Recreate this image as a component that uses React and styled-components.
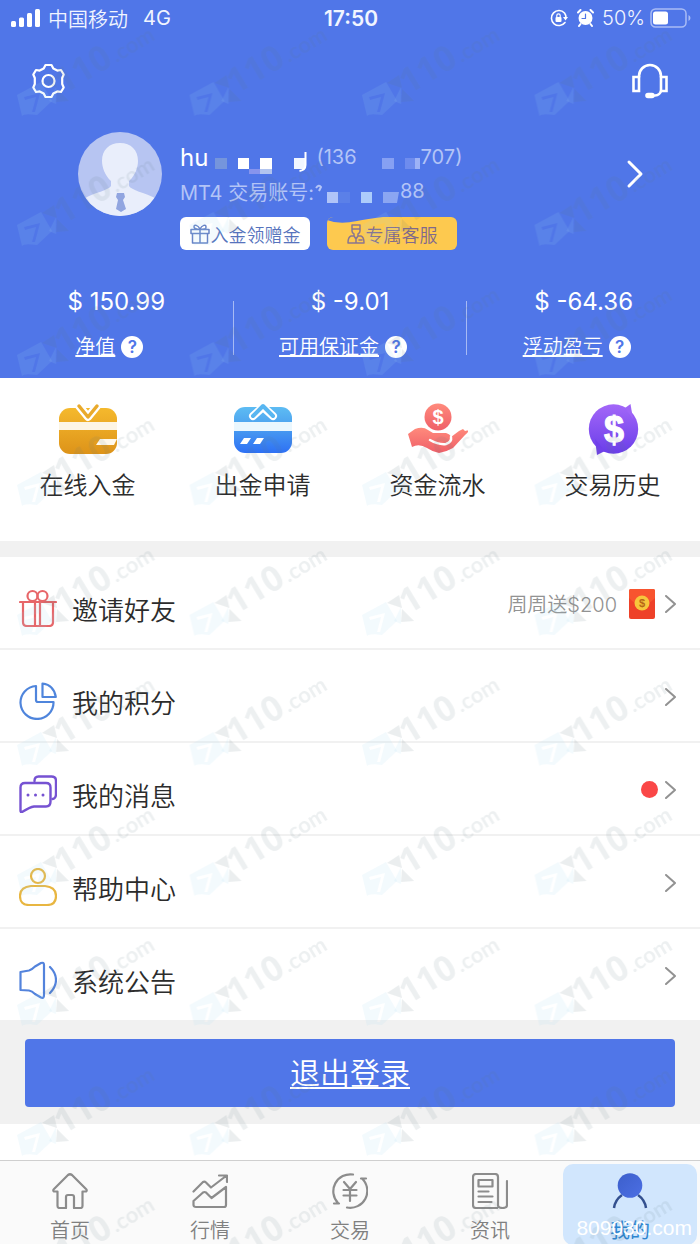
import React from "react";
import styled, { createGlobalStyle } from "styled-components";

const GlobalStyle = createGlobalStyle`
  * { box-sizing: border-box; }
  body {
    margin: 0;
    background: #fff;
    color: #3a3a3a;
    font-family: Inter, "Noto Sans CJK SC", sans-serif;
    font-size: 20px;
  }
  button { font: inherit; color: inherit; border: 0; padding: 0; background: none; cursor: pointer; }
  a { color: inherit; }
  svg { display: block; flex: none; }
`;

const Page = styled.div`
  position: relative;
  min-height: 100vh;
  display: flex;
  flex-direction: column;
  overflow: hidden;
`;

const Header = styled.header`
  background: #5076e8;
  color: #fff;
`;

const StatusBar = styled.div`
  display: grid;
  grid-template-columns: 1fr auto 1fr;
  align-items: center;
  height: 36px;
  padding: 0 9px 0 11px;
  color: #f1f5ff;
`;

const StatusGroup = styled.div`
  display: flex;
  align-items: center;
  gap: ${(p) => (p.$end ? 5 : 7)}px;
  font-weight: 350;
  justify-content: ${(p) => (p.$end ? "flex-end" : "flex-start")};
`;

const Network = styled.span`
  margin-left: 8px;
  font-weight: 400;
`;

const StatusIcons = styled.span`
  display: flex;
  gap: 9px;
  margin-right: 3px;
`;

const Clock = styled.time`
  font-size: 21px;
  font-weight: 600;
`;

const Toolbar = styled.div`
  display: flex;
  align-items: center;
  justify-content: space-between;
  height: 90px;
  padding: 0 31px;
`;

const Profile = styled.section`
  display: flex;
  align-items: flex-start;
  padding: 6px 56px 0 78px;
`;

const ProfileText = styled.div`
  flex: 1;
  padding: 8px 0 0 18px;
`;

const ProfileLine = styled.div`
  display: flex;
  align-items: center;
  height: 34px;
  color: #b3c4f7;
  white-space: pre;
`;

const UserName = styled.span`
  font-size: 24px;
  color: #fff;
`;

const ProfileLink = styled.button`
  height: 84px;
`;

const Chips = styled.div`
  display: flex;
  gap: 17px;
  margin-top: 9px;
`;

const Chip = styled.button`
  position: relative;
  display: flex;
  align-items: center;
  justify-content: center;
  gap: 1px;
  width: 130px;
  height: 33px;
  border-radius: 6px;
  overflow: hidden;
  font-size: 18px;
  font-weight: 350;
  color: ${(p) => (p.$gold ? "#80698c" : "#5673bd")};
  background: ${(p) => (p.$gold ? "#fdc94f" : "#fff")};
`;

const ChipSmudge = styled.svg`
  position: absolute;
  top: 0;
  left: 0;
`;

const Stats = styled.section`
  display: flex;
  padding: 37px 0 16px;
`;

const Stat = styled.div`
  flex: 1;
  display: flex;
  flex-direction: column;
  align-items: center;
  gap: 15px;
  line-height: 30px;
`;

const StatValue = styled.div`
  font-size: 24px;
`;

const StatLabel = styled.div`
  display: flex;
  align-items: center;
  gap: 6px;
  padding-right: 14px;
  font-weight: 350;
`;

const StatDivider = styled.div`
  width: 1px;
  height: 54px;
  margin-top: 14px;
  background: #a7baf4;
`;

const Help = styled.button`
  width: 22px;
  height: 22px;
  border-radius: 50%;
  background: #fff;
  color: #5076e8;
  font-size: 17px;
  font-weight: 600;
  line-height: 22px;
`;

const QuickGrid = styled.nav`
  display: grid;
  grid-template-columns: repeat(4, 1fr);
  padding: 25px 0 40px;
`;

const QuickItem = styled.a`
  display: flex;
  flex-direction: column;
  align-items: center;
  gap: 16px;
  font-size: 24px;
  font-weight: 350;
  line-height: 30px;
  color: #2c2c2c;
  text-decoration: none;
`;

const Menu = styled.nav`
  border-top: 16px solid #f1f1f1;
`;

const MenuRow = styled.a`
  display: flex;
  align-items: center;
  justify-content: space-between;
  height: 93px;
  padding: 0 24px 0 19px;
  border-bottom: 2px solid #f1f1f1;
  text-decoration: none;
  &:last-child { height: 91px; border-bottom: 0; }
`;

const MenuName = styled.span`
  display: flex;
  align-items: center;
  gap: 15px;
  padding-top: 10px;
`;

const MenuLabel = styled.span`
  padding-top: 6px;
  font-size: 26px;
  font-weight: 350;
  line-height: 32px;
  color: #2c2c2c;
`;

const MenuExtra = styled.span`
  display: flex;
  align-items: center;
  gap: 10px;
  padding-top: 2px;
  color: #929292;
  font-weight: 350;
`;

const Promo = styled.span`
  display: flex;
  align-items: center;
  gap: 12px;
`;

const UnreadDot = styled.span`
  width: 17px;
  height: 17px;
  margin-right: -3px;
  border-radius: 50%;
  background: #fa4747;
`;

const LogoutArea = styled.div`
  padding: 19px 25px 17px;
  background: #f1f1f1;
`;

const LogoutButton = styled.button`
  width: 100%;
  height: 68px;
  padding-bottom: 4px;
  border-radius: 4px;
  background: #5076e8;
  color: #fff;
  font-size: 30px;
  font-weight: 350;
  text-decoration: underline;
  text-decoration-thickness: 2px;
  text-underline-offset: 3px;
`;

const TabBar = styled.nav`
  display: grid;
  grid-template-columns: repeat(5, 1fr);
  height: 84px;
  margin-top: auto;
  border-top: 1px solid #cfcfcf;
  background: #fafafa;
`;

const Tab = styled.a`
  display: flex;
  flex-direction: column;
  align-items: center;
  gap: 8px;
  margin: 3px;
  padding-top: 9px;
  border-radius: 10px;
  line-height: 28px;
  text-decoration: none;
  font-weight: ${(p) => (p.$active ? 400 : 350)};
  color: ${(p) => (p.$active ? "#2d85cf" : "#808080")};
  background: ${(p) => (p.$active ? "#d1e6fd" : "transparent")};
`;

const WatermarkLayer = styled.svg`
  position: absolute;
  inset: 0;
  width: 100%;
  height: 100%;
  pointer-events: none;
`;

const SiteStamp = styled.span`
  position: absolute;
  right: 8px;
  bottom: 4px;
  color: #fff;
  font-family: "Liberation Sans", sans-serif;
  font-size: 21px;
  line-height: 24px;
  pointer-events: none;
`;

const line = { fill: "none", strokeLinecap: "round", strokeLinejoin: "round" };

const SignalIcon = () => (
  <svg width="30" height="18" viewBox="0 0 30 18" fill="#fff" aria-hidden="true">
    <rect x="0" y="12" width="5" height="6" rx="1.5" />
    <rect x="8" y="8.500" width="5" height="9.500" rx="1.500" />
    <rect x="16" y="4" width="5" height="14" rx="1.500" />
    <rect x="24" y="0" width="5" height="18" rx="1.500" />
  </svg>
);

const LockIcon = () => (
  <svg width="18" height="18" viewBox="0 0 18 18" aria-hidden="true">
    <path d="M14.500 4A7.500 7.500 0 1 0 15 13.500M14.500 4Q16 6 16 8.500" stroke="#fff" strokeWidth="1.600" {...line} />
    <path d="M13 8h5l-2.500 3.500z" fill="#fff" />
    <rect x="5.500" y="8" width="6" height="5" rx="1" fill="#fff" />
    <path d="M6.800 8V6.500a1.700 1.700 0 0 1 3.400 0V8" stroke="#fff" strokeWidth="1.200" fill="none" />
  </svg>
);

const AlarmIcon = () => (
  <svg width="17" height="18" viewBox="0 0 17 18" aria-hidden="true">
    <circle cx="8.500" cy="9" r="7" fill="#fff" />
    <path d="M1 3.500L3.500 1M16 3.500L13.500 1M3.500 15l-1.500 2M13.500 15l1.500 2" stroke="#fff" strokeWidth="2" {...line} />
    <path d="M8.500 5v4.500H5" stroke="#5076e8" strokeWidth="1.200" {...line} />
  </svg>
);

const BatteryIcon = () => (
  <svg width="41" height="20" viewBox="0 0 41 20" aria-hidden="true">
    <rect x="1" y="1" width="35" height="18" rx="4.500" fill="none" stroke="#a9bcf5" strokeWidth="1.500" />
    <rect x="3" y="3.500" width="15" height="13" rx="2.500" fill="#fff" />
    <path d="M38.500 7v6q2-1 2-3t-2-3z" fill="#a9bcf5" />
  </svg>
);

const GearIcon = () => (
  <svg width="35" height="36" viewBox="0 0 35 36" stroke="#fff" strokeWidth="2.200" {...line} aria-hidden="true">
    <path d="M14.500 2h6l1.800 3.600 4 2 3.700-.6 2.700 4.500-1.500 3.500v6l1.500 3.500-2.700 4.500-3.700-.6-4 2L20.500 34h-6l-1.800-3.600-4-2L5 29l-2.700-4.500L3.800 21v-6l-1.500-3.500L5 7l3.700.6 4-2z" />
    <circle cx="17.500" cy="18" r="6" />
  </svg>
);

const HeadsetIcon = () => (
  <svg width="38" height="36" viewBox="0 0 38 36" stroke="#fff" strokeWidth="2.600" {...line} aria-hidden="true">
    <path d="M8 14v-1a11 11 0 0 1 22 0v1" />
    <path d="M2.500 14H8v14H2.500zM30 14h5.500v14H30z" strokeLinejoin="miter" />
    <path d="M30 28q-1 4-6 4.500" />
    <rect x="15.500" y="31" width="7" height="3" rx="1.500" fill="#fff" />
  </svg>
);

const Avatar = () => (
  <svg width="84" height="84" viewBox="0 0 84 84" role="img" aria-label="头像">
    <clipPath id="avatarClip"><circle cx="42" cy="42" r="42" /></clipPath>
    <g clipPath="url(#avatarClip)">
      <rect width="84" height="84" fill="#b7c5f2" />
      <path d="M42 11c11 0 18 7 18 18 0 6-3 15-9 20v5c2 4 16 7 26 12v20H7V66c9-5 24-8 26-12v-5c-6-5-9-14-9-20 0-11 7-18 18-18z" fill="#e9eefb" />
      <path d="M39 61h7l1 4-2 3 3 9-5 3-5-3 2-9-2-3z" fill="#91a5e0" />
    </g>
  </svg>
);

const NameMosaic = () => (
  <svg width="108" height="34" viewBox="-4 0 108 34" aria-hidden="true">
    <rect x="3" y="18" width="12" height="11" fill="#7595dc" />
    <rect x="26" y="18" width="11" height="11" fill="#fff" />
    <rect x="48" y="18" width="12" height="11" fill="#fff" />
    <rect x="37" y="29" width="11" height="5" fill="#8794ed" />
    <rect x="48" y="29" width="12" height="5" fill="#b2c4ef" />
    <rect x="82" y="18" width="11" height="11" fill="#f1f6ff" />
    <path d="M93.500 12v13q0 5-6 6" stroke="#fff" strokeWidth="2" fill="none" />
  </svg>
);

const PhoneMosaic = () => (
  <svg width="64" height="34" viewBox="0 0 64 34" aria-hidden="true">
    <rect x="25" y="18" width="12" height="11" fill="#86a0f3" />
    <rect x="48" y="18" width="12" height="11" fill="#6e8cee" />
    <rect x="58" y="18" width="5" height="11" fill="#9db2f6" />
  </svg>
);

const AccountMosaic = () => (
  <svg width="86" height="34" viewBox="-4 0 86 34" aria-hidden="true">
    <path d="M-2 14q3-4 5-1l-2 4" stroke="#b3c4f7" strokeWidth="2" fill="none" />
    <rect x="9" y="18" width="11" height="11" fill="#b0c4f8" />
    <rect x="20" y="18" width="12" height="11" fill="#5b80e8" />
    <rect x="43" y="18" width="11" height="11" fill="#acccfb" />
    <path d="M65 18h16l-2 11H65z" fill="#8ba6f2" />
  </svg>
);

const BigChevron = () => (
  <svg width="18" height="30" viewBox="0 0 18 30" stroke="#fff" strokeWidth="3" {...line} aria-hidden="true">
    <path d="M3 3l12 12L3 27" />
  </svg>
);

const Chevron = () => (
  <svg width="11" height="18" viewBox="0 0 11 18" stroke="#929292" strokeWidth="2" {...line} aria-hidden="true">
    <path d="M1 1l9 8-9 8" />
  </svg>
);

const ChipGift = () => (
  <svg width="20" height="20" viewBox="0 0 20 20" stroke="#6683c6" strokeWidth="1.500" {...line} aria-hidden="true">
    <path d="M1 5.500h18v4H1zM2.500 9.500V19h15V9.500M10 5.500V19M10 5C8 1 4 0 4 3q0 2 6 2.500C16 5 16 5 16 3c0-3-4-2-6 2" />
  </svg>
);

const ChipAgent = () => (
  <svg width="18" height="20" viewBox="0 0 18 20" stroke="#8a7690" strokeWidth="1.500" {...line} aria-hidden="true">
    <path d="M5 1h8v6q0 2-2 3v2h3q3 1 3 7H1q0-6 3-7h3v-2Q5 9 5 7zM5 5h8M9 14v5M7 12l2 3 2-3M12 16h3" />
  </svg>
);

const DepositIcon = () => (
  <svg width="60" height="52" viewBox="0 0 60 52" aria-hidden="true">
    <linearGradient id="gold" x1="0" y1="0" x2="0" y2="1"><stop stopColor="#f5b92d" /><stop offset="1" stopColor="#dd9319" /></linearGradient>
    <rect x="1" y="5" width="58" height="46" rx="11" fill="url(#gold)" />
    <rect x="1" y="19" width="58" height="8" fill="#fdf5e4" />
    <path d="M21 3l9 11 9-11" stroke="#fff" strokeWidth="8" {...line} />
    <path d="M21 3l9 11 9-11" stroke="#e9aa2c" strokeWidth="3.500" {...line} />
    <path d="M38 42l4-6h17l-3 6z" fill="#fff8ea" />
  </svg>
);

const WithdrawIcon = () => (
  <svg width="60" height="52" viewBox="0 0 60 52" aria-hidden="true">
    <linearGradient id="sky" x1="0" y1="0" x2="0" y2="1"><stop stopColor="#5dbcf3" /><stop offset=".4" stopColor="#4da2ef" /><stop offset="1" stopColor="#2d70f5" /></linearGradient>
    <rect x="1" y="4" width="58" height="46" rx="11" fill="url(#sky)" />
    <rect x="1" y="19" width="58" height="9" fill="#eaf7fe" />
    <path d="M20 13L30 4l10 9" stroke="#fff" strokeWidth="8" {...line} />
    <path d="M20 13L30 3l10 10" stroke="#58b6f1" strokeWidth="4" {...line} />
    <path d="M7 41l4-6h7l-4 6zM20 41l4-6h7l-4 6z" fill="#fff" />
  </svg>
);

const FundsIcon = () => (
  <svg width="60" height="52" viewBox="0 0 60 52" aria-hidden="true">
    <linearGradient id="coral" x1="0" y1="0" x2="0" y2="1"><stop stopColor="#ff8a7c" /><stop offset="1" stopColor="#ef5f68" /></linearGradient>
    <circle cx="30" cy="14" r="13.500" fill="url(#coral)" />
    <text x="30" y="21" textAnchor="middle" fontFamily="Liberation Sans" fontSize="20" fontWeight="700" fill="#fff">$</text>
    <path d="M0 31L7 26q8-3 13 1l5 3h13q4 1 5 4l8-6 4-2 2 2 4-1q-1 3-4 5L45 45q-7 4-14 5-6-1-12-5-8-5-15-1z" fill="url(#coral)" />
    <path d="M22 37q9 5 16 4 6-2 5-7" stroke="#fff" strokeWidth="2.500" {...line} />
  </svg>
);

const HistoryIcon = () => (
  <svg width="60" height="52" viewBox="0 0 60 52" aria-hidden="true">
    <linearGradient id="violet" x1="0" y1="0" x2="0" y2="1"><stop stopColor="#a367f8" /><stop offset="1" stopColor="#6a3ee9" /></linearGradient>
    <circle cx="30.500" cy="26" r="24.700" fill="url(#violet)" />
    <path d="M42 5l5.500-4 2.500 15z" fill="#9f64f7" />
    <path d="M12 36l2 16 8-4z" fill="#7040ea" />
    <text x="31" y="39" textAnchor="middle" fontFamily="Liberation Sans" fontSize="36" fontWeight="700" fill="#fff" stroke="#fff">$</text>
  </svg>
);

const GiftIcon = () => (
  <svg width="38" height="38" viewBox="0 0 38 38" stroke="#e76669" strokeWidth="2.200" {...line} aria-hidden="true">
    <path d="M1 13h36M4 13v20q0 4 4 4h22q4 0 4-4V13M16 13v24M21 13v24" />
    <circle cx="13.500" cy="7" r="5" />
    <circle cx="23.500" cy="7" r="5" />
  </svg>
);

const PieIcon = () => (
  <svg width="38" height="38" viewBox="0 0 38 38" stroke="#4f85dc" strokeWidth="2.200" {...line} aria-hidden="true">
    <path d="M17 4a16.500 16.500 0 1 0 17.500 16H19q-2 0-2-2z" />
    <path d="M23.500 1.500Q35 3 36.800 15H23.500z" />
  </svg>
);

const ChatIcon = () => (
  <svg width="38" height="38" viewBox="0 0 38 38" stroke="#7652d2" strokeWidth="2.400" {...line} aria-hidden="true">
    <path d="M15.500 6q0-4.500 4-4.500h13q4.500 0 4.500 4.500v13q0 4.500-3.500 5" />
    <path d="M6 8h21q4.500 0 4.500 4.500v14q0 5-4.500 5H15Q11 32 3 37q-1.500.5-1.500-1.500v-23Q1.500 8 6 8z" />
    <path d="M9 20h.01M16.500 20h.01M24 20h.01" strokeWidth="3" />
  </svg>
);

const PersonIcon = () => (
  <svg width="38" height="38" viewBox="0 0 38 38" stroke="#e8b641" strokeWidth="2.200" {...line} aria-hidden="true">
    <circle cx="19" cy="8" r="7" />
    <path d="M12 18h14q11 1 11 10 0 9-9 9H10q-9 0-9-9 0-9 11-10z" />
  </svg>
);

const SpeakerIcon = () => (
  <svg width="38" height="38" viewBox="0 0 38 38" stroke="#5383dc" strokeWidth="2.200" {...line} aria-hidden="true">
    <path d="M1.500 11L10 9.500q3-1 6-4L22 2q3-1 3 2v30q0 4-3 2.500L16 33q-3-3-6-3.500L1.500 29z" />
    <path d="M31 6q6 6 6 13t-6 13" />
  </svg>
);

const EnvelopeIcon = () => (
  <svg width="26" height="30" viewBox="0 0 26 30" aria-hidden="true">
    <rect width="26" height="30" rx="2" fill="#ee4129" />
    <path d="M0 9q13 14 26 0V2q0-2-2-2H2Q0 0 0 2z" fill="#f8542f" />
    <circle cx="13" cy="14" r="7.500" fill="#f7c63c" />
    <text x="13" y="18" textAnchor="middle" fontFamily="Liberation Sans" fontSize="11" fontWeight="700" fill="#b76616">$</text>
  </svg>
);

const HomeIcon = () => (
  <svg width="36" height="36" viewBox="0 0 36 36" stroke="#8c8c8c" strokeWidth="2.200" {...line} aria-hidden="true">
    <path d="M5.500 18.500H2q-1.500-1 0-2.500L16 2q2-1.500 4 0l14 14q1.500 1.500 0 2.500h-3.500V33q0 2-2 2H22V24q0-2-2-2h-4q-2 0-2 2v11H7.500q-2 0-2-2z" />
  </svg>
);

const ChartIcon = () => (
  <svg width="36" height="36" viewBox="0 0 36 36" stroke="#8c8c8c" strokeWidth="2.200" {...line} aria-hidden="true">
    <path d="M1.500 18.500L11 9q1.500-1 3 .5l5 5L34 3M27 2.500h8V9" />
    <path d="M34 14v18q0 2-2 2H4q-2.500 0-2.500-2v-4L11 19.500q1.500-1 3 0L19.500 25z" />
  </svg>
);

const TradeIcon = () => (
  <svg width="36" height="36" viewBox="0 0 36 36" stroke="#8c8c8c" strokeWidth="2.200" {...line} aria-hidden="true">
    <path d="M21 1.500A17 17 0 0 0 6 30M2 30.500h5" />
    <path d="M15 34.500A17 17 0 0 0 30 5.500M34 5.500h-5" />
    <path d="M12 9l6 7 6-7M11.500 17h13M11.500 22.500h13M18 16v12" />
  </svg>
);

const NewsIcon = () => (
  <svg width="36" height="36" viewBox="0 0 36 36" stroke="#8c8c8c" strokeWidth="2.200" {...line} aria-hidden="true">
    <path d="M25 35H4q-3 0-3-3V4q0-3 3-3h19q3 0 3 3v28q0 3 4.500 3T35 32V8" />
    <path d="M6.500 7h14v6.500h-14zM6.500 18.500h10M6.500 23.500h14M6.500 29h13" />
  </svg>
);

const MeIcon = () => (
  <svg width="36" height="36" viewBox="0 0 36 36" aria-hidden="true">
    <linearGradient id="meBlue" x1="0" y1="0" x2="1" y2="1"><stop stopColor="#3c5fcb" /><stop offset="1" stopColor="#4c6fe4" /></linearGradient>
    <path d="M2 35q1-8 8-13M34 35q-1-8-8-13" stroke="#33508f" strokeWidth="2.500" fill="none" />
    <circle cx="18" cy="12.500" r="12.300" fill="url(#meBlue)" />
  </svg>
);

const Watermark = () => (
  <WatermarkLayer aria-hidden="true">
    <defs>
      <pattern id="brandTile" x="10" y="25" width="172.500" height="130" patternUnits="userSpaceOnUse">
        <path fillRule="evenodd" d="M7 70L31 57l11 19-15 14q-13-2-15 1zM14 72l1 3 11-3-4 15 3 0 5-19z" fill="#9fd6f5" fillOpacity=".12" />
        <path d="M32 58l12-8 3 13zM47 64l12 12-13 1z" fill="#5a7480" fillOpacity=".12" />
        <path d="M46 62l-7 14 7 3z" fill="#9fd6f5" fillOpacity=".12" />
        <g transform="translate(53 70) rotate(-31)" fill="#5a7480" fillOpacity=".11" fontWeight="700">
          <text fontFamily="Open Sans, sans-serif" fontSize="35">110</text>
          <text x="62" fontFamily="Lato, sans-serif" fontSize="22">.com</text>
        </g>
      </pattern>
    </defs>
    <rect width="100%" height="100%" fill="url(#brandTile)" />
  </WatermarkLayer>
);

const stats = [
  { value: "$ 150.99", label: "净值" },
  { value: "$ -9.01", label: "可用保证金" },
  { value: "$ -64.36", label: "浮动盈亏" },
];

const quickLinks = [
  { label: "在线入金", Icon: DepositIcon },
  { label: "出金申请", Icon: WithdrawIcon },
  { label: "资金流水", Icon: FundsIcon },
  { label: "交易历史", Icon: HistoryIcon },
];

const menu = [
  { label: "邀请好友", Icon: GiftIcon, extra: <Promo>周周送$200<EnvelopeIcon /></Promo> },
  { label: "我的积分", Icon: PieIcon },
  { label: "我的消息", Icon: ChatIcon, extra: <UnreadDot /> },
  { label: "帮助中心", Icon: PersonIcon },
  { label: "系统公告", Icon: SpeakerIcon },
];

const tabs = [
  { label: "首页", Icon: HomeIcon },
  { label: "行情", Icon: ChartIcon },
  { label: "交易", Icon: TradeIcon },
  { label: "资讯", Icon: NewsIcon },
  { label: "我的", Icon: MeIcon, active: true },
];

export default function App() {
  return (
    <Page>
      <GlobalStyle />
      <Header>
        <StatusBar>
          <StatusGroup>
            <SignalIcon />
            <span>中国移动</span>
            <Network>4G</Network>
          </StatusGroup>
          <Clock>17:50</Clock>
          <StatusGroup $end>
            <StatusIcons>
              <LockIcon />
              <AlarmIcon />
            </StatusIcons>
            <span>50%</span>
            <BatteryIcon />
          </StatusGroup>
        </StatusBar>
        <Toolbar>
          <button aria-label="设置"><GearIcon /></button>
          <button aria-label="客服"><HeadsetIcon /></button>
        </Toolbar>
        <Profile>
          <Avatar />
          <ProfileText>
            <ProfileLine>
              <UserName>hu</UserName>
              <NameMosaic />
              <span>(136</span>
              <PhoneMosaic />
              <span>707)</span>
            </ProfileLine>
            <ProfileLine>
              <span>MT4 交易账号:</span>
              <AccountMosaic />
              <span>88</span>
            </ProfileLine>
            <Chips>
              <Chip><ChipGift />入金领赠金</Chip>
              <Chip $gold>
                <ChipAgent />专属客服
                <ChipSmudge width="56" height="6" viewBox="0 0 56 6" aria-hidden="true">
                  <path d="M0 0h56Q40 2 30 4 12 8 0 3z" fill="#5076e8" />
                </ChipSmudge>
              </Chip>
            </Chips>
          </ProfileText>
          <ProfileLink aria-label="个人资料"><BigChevron /></ProfileLink>
        </Profile>
        <Stats>
          {stats.map((s, i) => (
            <React.Fragment key={s.label}>
              {i > 0 && <StatDivider />}
              <Stat>
                <StatValue>{s.value}</StatValue>
                <StatLabel>
                  <a href="#stat">{s.label}</a>
                  <Help aria-label={`${s.label}说明`}>?</Help>
                </StatLabel>
              </Stat>
            </React.Fragment>
          ))}
        </Stats>
      </Header>
      <QuickGrid>
        {quickLinks.map(({ label, Icon }) => (
          <QuickItem href="#quick" key={label}><Icon />{label}</QuickItem>
        ))}
      </QuickGrid>
      <Menu>
        {menu.map(({ label, Icon, extra }) => (
          <MenuRow href="#menu" key={label}>
            <MenuName><Icon /><MenuLabel>{label}</MenuLabel></MenuName>
            <MenuExtra>{extra}<Chevron /></MenuExtra>
          </MenuRow>
        ))}
      </Menu>
      <LogoutArea>
        <LogoutButton>退出登录</LogoutButton>
      </LogoutArea>
      <TabBar>
        {tabs.map(({ label, Icon, active }) => (
          <Tab href="#tab" key={label} $active={active}><Icon />{label}</Tab>
        ))}
      </TabBar>
      <Watermark />
      <SiteStamp>809030.com</SiteStamp>
    </Page>
  );
}
